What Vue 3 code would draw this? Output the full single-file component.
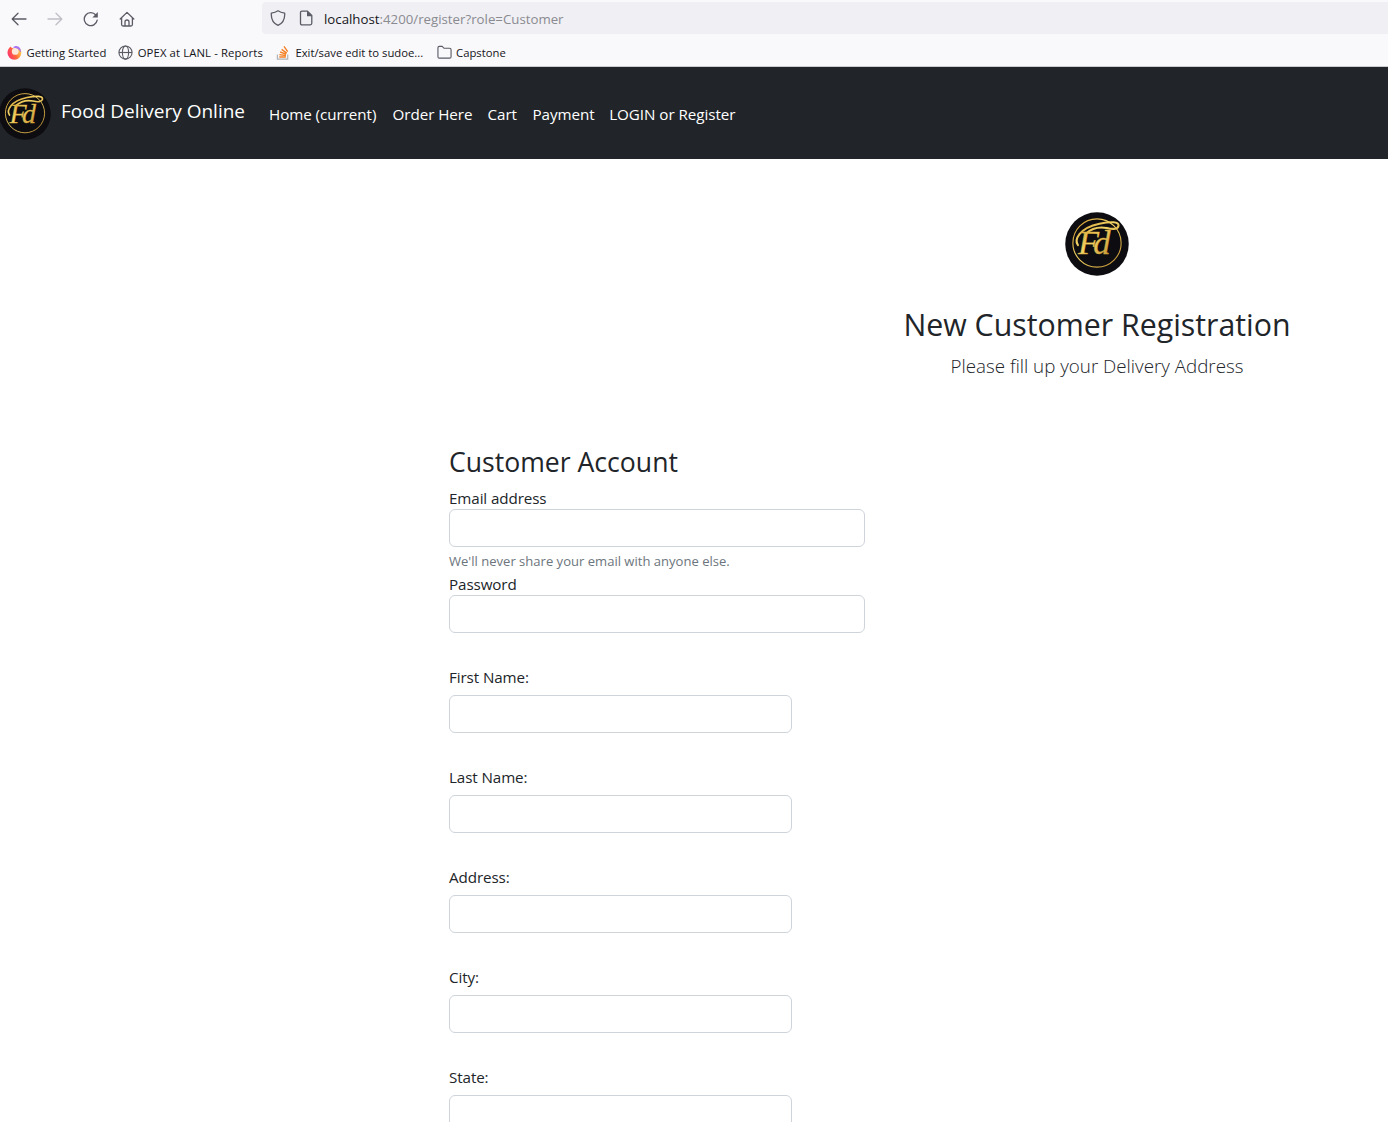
<script setup>
import { h } from 'vue'

const bookmarks = [
  { id: 'firefox', label: 'Getting Started', width: 79 },
  { id: 'globe', label: 'OPEX at LANL - Reports', width: 125.5, wide: true },
  { id: 'stack', label: 'Exit/save edit to sudoe...', width: 128.5 },
  { id: 'folder', label: 'Capstone', width: 52 },
]
const nav = [
  { label: 'Home (current)', width: 107.5 },
  { label: 'Order Here', width: 79 },
  { label: 'Cart', width: 29 },
  { label: 'Payment', width: 60.7 },
  { label: 'LOGIN or Register', width: 130 },
]
const fields = ['First Name:', 'Last Name:', 'Address:', 'City:', 'State:']

// Round monogram badge used in the navbar and above the form title.
const BrandMark = () =>
  h('svg', { viewBox: '0 0 52 52' }, [
    h('defs', [
      h('linearGradient', { id: 'gold', x1: 0, y1: 0, x2: 1, y2: 1 }, [
        h('stop', { offset: 0, 'stop-color': '#c9922a' }),
        h('stop', { offset: 0.45, 'stop-color': '#f3d566' }),
        h('stop', { offset: 1, 'stop-color': '#b9852b' }),
      ]),
    ]),
    h('circle', { cx: 26, cy: 26, r: 25.8, fill: '#0d0c10' }),
    h('circle', { cx: 26, cy: 25.2, r: 19.6, fill: 'none', stroke: 'url(#gold)', 'stroke-width': 0.9 }),
    h('path', {
      d: 'M10.500 27C7.500 23 11 13 28 9.500C38 7.500 43.500 8 43.500 11C43 14.500 38 14 34 13C28 11.800 22 13 17 17.500',
      fill: 'none', stroke: 'url(#gold)', 'stroke-width': 1.7, 'stroke-linecap': 'round',
    }),
    h('text', {
      x: 10.5, y: 34.5, fill: 'url(#gold)', stroke: '#d9a838', 'stroke-width': 0.3,
      'font-family': '"Liberation Serif", serif', 'font-style': 'italic', 'font-size': 28,
      'letter-spacing': -4.6,
    }, 'Fd'),
  ])
</script>

<template>
  <div class="page">
    <header class="browser">
      <div class="toolbar">
        <svg class="tool" viewBox="0 0 16 16"><path d="M15 8H1.500M7 2.200 1.200 8 7 13.800" /></svg>
        <svg class="tool dim" viewBox="0 0 16 16"><path d="M1 8h13.500M9 2.200 14.800 8 9 13.800" /></svg>
        <svg class="tool" viewBox="0 0 16 16"><path d="M14.200 9.200A6.500 6.500 0 1 1 12.800 4" /><path class="solid" d="M14.800 1v5.400H9.400z" /></svg>
        <svg class="tool" viewBox="0 0 16 16"><path d="M1.200 8 8 1.400 14.800 8M2.600 7v6.500q0 1.500 1.500 1.500h7.800q1.500 0 1.500-1.500V7M6 15v-4q0-2 2-2t2 2v4" /></svg>
        <div class="address">
          <svg class="tool" viewBox="0 0 16 16"><path d="M8 .8C10 2.200 12 2.800 14.700 3.200C15 9 12.500 13.500 8 15.400C3.500 13.500 1 9 1.300 3.200C4 2.800 6 2.200 8 .8z" /></svg>
          <svg class="tool doc" viewBox="0 0 16 16"><path d="M4 1.200h5.500l4.300 4.300v7.800q0 1.500-1.500 1.500H4q-1.500 0-1.500-1.500V2.700q0-1.500 1.500-1.500z" /><path class="solid" d="M9 1.200v5h5z" /></svg>
          <span class="url"><b>localhost</b>:4200/register?role=Customer</span>
        </div>
      </div>
      <div class="bookmarks">
        <div v-for="b in bookmarks" :key="b.id" class="bookmark">
          <svg v-if="b.id === 'firefox'" viewBox="0 0 16 16">
            <defs>
              <linearGradient id="fire" x1="0" y1="0.700" x2="1" y2="0.300">
                <stop offset="0" stop-color="#ff3070" /><stop offset="0.500" stop-color="#ff6a3c" /><stop offset="1" stop-color="#ffd84a" />
              </linearGradient>
            </defs>
            <path d="M4 1.500C1.800 2.800.5 5.500.5 8.300A7.400 7.400 0 0 0 15.300 8.300C15.300 6 14 3.500 12.500 2.500L8 3.500C6 3.500 4.500 3 4 1.500z" fill="url(#fire)" />
            <circle cx="8.800" cy="6.800" r="3.600" fill="#fde9dc" />
            <path d="M6.500 2.800C8 .6 12 .5 13.900 3.500C14.800 5 15 6.500 14.400 8C13.500 4.500 11 2.800 6.500 2.800z" fill="#a873f5" />
          </svg>
          <svg v-else-if="b.id === 'globe'" class="line" viewBox="0 0 16 16">
            <circle cx="8" cy="8" r="7" /><ellipse cx="8" cy="8" rx="3.300" ry="7" /><path d="M1 8h14" />
          </svg>
          <svg v-else-if="b.id === 'stack'" viewBox="0 0 16 16">
            <path d="M1.500 10v5h11v-5" fill="none" stroke="#b0b2b5" stroke-width="1.300" />
            <path d="M3.500 12.800h7M3.600 10.300l7 .9M4.400 7.500l6.500 2.200M6 4.600l5.500 4M8.500 1.500l4 5.500" fill="none" stroke="#f48024" stroke-width="1.500" />
          </svg>
          <svg v-else class="line" viewBox="0 0 16 16">
            <path d="M1 3q0-1.500 1.500-1.500h3L7.500 3.500h6q1.500 0 1.500 1.500v7.500q0 1.500-1.500 1.500h-11Q1 14 1 12.500z" />
          </svg>
          <span :class="{ wide: b.wide }" :style="{ width: b.width + 'px' }">{{ b.label }}</span>
        </div>
      </div>
    </header>

    <nav class="navbar">
      <BrandMark class="nav-logo" />
      <span class="brand">Food Delivery Online</span>
      <a v-for="n in nav" :key="n.label" class="nav-link" :style="{ width: n.width + 'px' }">{{ n.label }}</a>
    </nav>

    <main>
      <section class="intro">
        <BrandMark class="intro-logo" />
        <h2>New Customer Registration</h2>
        <p>Please fill up your Delivery Address</p>
      </section>
      <form class="account">
        <h3>Customer Account</h3>
        <label>Email address</label>
        <input type="email" />
        <small>We'll never share your email with anyone else.</small>
        <label>Password</label>
        <input type="password" />
        <div v-for="f in fields" :key="f" class="field">
          <label>{{ f }}</label>
          <input type="text" />
        </div>
      </form>
    </main>
  </div>
</template>

<style>
body { overflow: hidden; }
</style>

<style scoped>
.page {
  width: 100%;
  height: 1122px;
  overflow: hidden;
  background: #fff;
  color: #212529;
  font-family: "Open Sans", "Noto Sans", sans-serif;
  font-size: 15.2px;
  line-height: 24px;
}
svg { display: block; flex: none; }

.browser {
  height: 67px;
  box-sizing: border-box;
  background: #f9f9fb;
  border-bottom: 1px solid #ccccd0;
}
.toolbar { display: flex; align-items: center; height: 37px; padding-left: 11px; gap: 20px; }
.tool { width: 16px; height: 16px; fill: none; stroke: #5b5b66; stroke-width: 1.3; stroke-linecap: round; stroke-linejoin: round; }
.tool.dim { stroke: #bfbfc6; }
.solid { fill: #5b5b66; stroke: none; }
.address {
  flex: 1;
  display: flex;
  align-items: center;
  height: 32px;
  margin: -1px 0 0 107px;
  padding-left: 8px;
  background: #f0f0f4;
  border-radius: 4px 0 0 4px;
}
.address .doc { margin-left: 12px; }
.url { margin: 2px 0 0 10px; font-size: 13.25px; color: #8a8a91; white-space: nowrap; }
.url b { font-weight: 400; color: #15141a; }
.bookmarks { display: flex; align-items: center; height: 30px; padding-left: 7px; gap: 12.7px; }
.bookmark { display: flex; align-items: center; gap: 4.5px; }
.bookmark svg { width: 15px; height: 15px; }
.bookmark .line { fill: none; stroke: #5b5b66; stroke-width: 1.2; }
.bookmark span { padding-top: 2px; font-size: 11.3px; line-height: 18px; color: #15141a; white-space: nowrap; }
.bookmark .wide { letter-spacing: 0.12px; }

.navbar { display: flex; align-items: center; height: 92px; background: #212529; color: #fff; white-space: nowrap; }
.nav-logo { width: 52px; height: 52px; margin: 2px 10px 0 -1px; }
.brand { width: 200px; font-size: 19px; margin-top: -5px; }
.nav-link { padding: 0 8px; margin-top: 2px; letter-spacing: -0.05px; }

main { display: flex; flex-direction: column; }
.intro { align-self: flex-end; width: 582px; height: 283px; display: flex; flex-direction: column; align-items: center; padding-top: 53px; box-sizing: border-box; }
.intro-logo { width: 64px; height: 64px; }
h2 { margin: 30px 0 7px; font-size: 30.3px; line-height: 38px; font-weight: 400; }
.intro p { margin: 0; font-size: 18.75px; line-height: 30px; font-weight: 300; }

.account { margin-left: 449px; width: 416px; }
h3 { margin: 0 0 6px; padding-top: 3px; font-size: 26.6px; line-height: 34px; font-weight: 400; }
label { display: block; height: 24px; line-height: 26px; letter-spacing: -0.1px; }
input {
  display: block;
  width: 100%;
  height: 38px;
  box-sizing: border-box;
  border: 1px solid #ced4da;
  border-radius: 6px;
  background: #fff;
}
small { display: block; height: 24px; padding-top: 3px; box-sizing: border-box; font-size: 13.05px; line-height: 22px; color: #6c757d; }
.field { width: 343px; padding-top: 32px; }
.field label { height: 30px; line-height: 24px; }
</style>
